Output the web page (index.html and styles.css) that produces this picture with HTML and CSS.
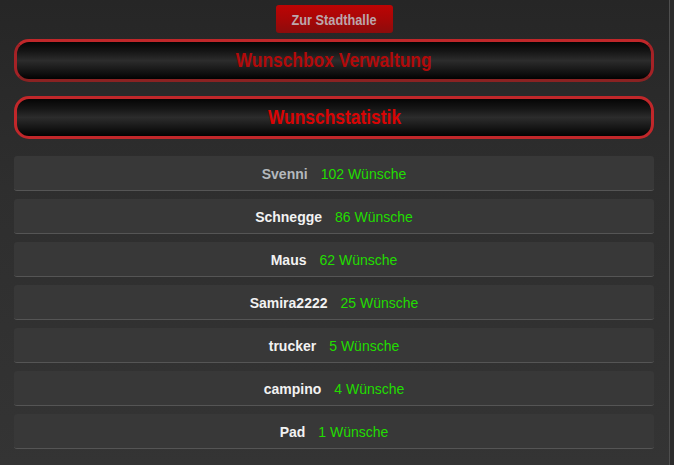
FILE: index.html
```html
<!DOCTYPE html>
<html lang="de">
<head>
<meta charset="utf-8">
<title>Wunschstatistik</title>
<link rel="stylesheet" href="styles.css">
</head>
<body>
<div class="page">
  <div class="content">
    <div class="top">
      <a class="btn-town" href="#"><span class="narrow">Zur Stadthalle</span></a>
    </div>
    <div class="panel panel-admin"><span class="narrow">Wunschbox Verwaltung</span></div>
    <div class="panel panel-stats"><span class="narrow">Wunschstatistik</span></div>
    <ul class="list">
      <li class="row"><span class="name name-first">Svenni</span><span class="count">102 Wünsche</span></li>
      <li class="row"><span class="name">Schnegge</span><span class="count">86 Wünsche</span></li>
      <li class="row"><span class="name">Maus</span><span class="count">62 Wünsche</span></li>
      <li class="row"><span class="name">Samira2222</span><span class="count">25 Wünsche</span></li>
      <li class="row"><span class="name">trucker</span><span class="count">5 Wünsche</span></li>
      <li class="row"><span class="name">campino</span><span class="count">4 Wünsche</span></li>
      <li class="row"><span class="name">Pad</span><span class="count">1 Wünsche</span></li>
    </ul>
  </div>
</div>
</body>
</html>
```
FILE: styles.css
```css
html, body {
  margin: 0;
  padding: 0;
  height: 100%;
}
body {
  background: #2b2b2b;
  font-family: "Liberation Sans", Arial, sans-serif;
  overflow: hidden;
}
.page {
  width: 669px;
  height: 465px;
  border-right: 1px solid #4e4e4e;
  background: linear-gradient(to bottom, #262626 0%, #2e2e2e 40%, #343434 100%);
}
.content {
  display: flex;
  flex-direction: column;
  padding: 5px 15px 0 14px;
}
.top {
  display: flex;
  justify-content: center;
}
.narrow {
  display: inline-block;
  transform: scaleX(0.87);
  white-space: nowrap;
}
.btn-town {
  display: flex;
  justify-content: center;
  align-items: center;
  width: 117px;
  height: 28px;
  border-radius: 3px;
  background: linear-gradient(to bottom, #bd0404 0%, #a80707 50%, #8c0c0c 100%);
  color: #bca6ab;
  font-weight: bold;
  font-size: 15px;
  text-decoration: none;
}
.btn-town .narrow {
  transform: scaleX(0.85);
}
.panel {
  height: 37px;
  display: flex;
  justify-content: center;
  align-items: center;
  border: 3px solid #c1272a;
  border-radius: 15px;
  background: linear-gradient(to bottom, #050505 0%, #151515 25%, #2c2c2c 50%, #151515 78%, #020202 100%);
  font-weight: bold;
  font-size: 20px;
}
.panel-admin {
  margin-top: 6px;
  color: #b10a0a;
  border-color: #c0272a #a52226 #8a2222 #a52226;
}
.panel-stats {
  margin-top: 14px;
  color: #d80404;
}
.list {
  list-style: none;
  margin: 17px 0 0 0;
  padding: 0;
  display: flex;
  flex-direction: column;
  gap: 8px;
}
.row {
  height: 32px;
  padding-top: 2px;
  display: flex;
  justify-content: center;
  align-items: center;
  gap: 13px;
  background: #383838;
  border-radius: 3px;
  border-bottom: 1px solid #555555;
  font-size: 14px;
}
.name {
  font-weight: bold;
  color: #f2f2f2;
}
.name-first {
  color: #b4b8bd;
}
.count {
  color: #22dd00;
}
```
